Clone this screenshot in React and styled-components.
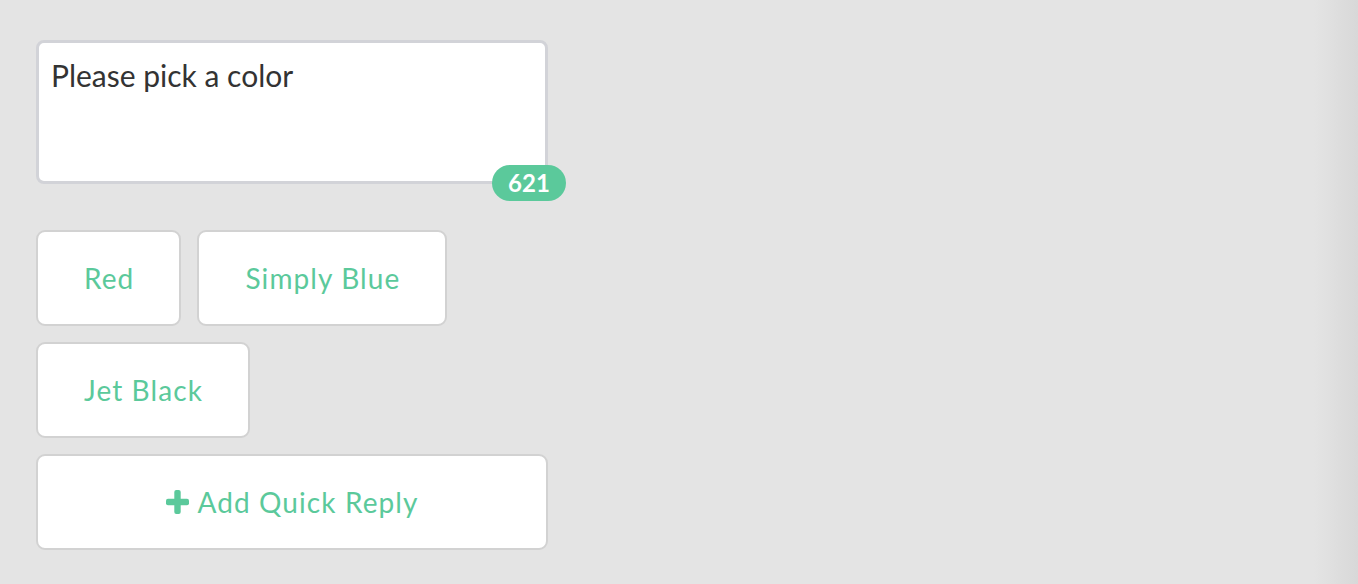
import React from "react";
import styled, { createGlobalStyle } from "styled-components";

const Global = createGlobalStyle`
  html, body {
    margin: 0;
    padding: 0;
    height: 100%;
  }
  body {
    font-family: Lato, "Open Sans", "Liberation Sans", sans-serif;
    background: linear-gradient(to right, #e4e4e4 0, #e4e4e4 calc(100% - 44px), #d8d8d8 100%);
    min-height: 584px;
  }
`;

const Page = styled.div`
  padding: 40px 36px;
  display: flex;
  flex-direction: column;
  width: 512px;
`;

const MessageBox = styled.div`
  position: relative;
  box-sizing: border-box;
  height: 144px;
  background: #fff;
  border: 3px solid #d2d3d8;
  border-radius: 8px;
  padding: 14px 12px;
  font-size: 30px;
  color: #333;
  line-height: 1.2;
`;

const Counter = styled.span`
  position: absolute;
  right: -21px;
  bottom: -20px;
  height: 36px;
  min-width: 74px;
  box-sizing: border-box;
  padding: 0 14px;
  border-radius: 18px;
  background: #5bc99b;
  color: #fff;
  font-weight: 700;
  font-size: 24px;
  line-height: 1;
  display: flex;
  align-items: center;
  justify-content: center;
`;

const Replies = styled.div`
  margin-top: 46px;
  display: flex;
  flex-wrap: wrap;
  gap: 16px;
`;

const ReplyButton = styled.button`
  box-sizing: border-box;
  height: 96px;
  padding: 0 45px 0 46px;
  background: #fff;
  border: 2px solid #d2d2d2;
  border-radius: 9px;
  font-family: inherit;
  font-size: 28px;
  letter-spacing: 1.1px;
  color: #5bc99b;
  display: flex;
  align-items: center;
  justify-content: center;
  gap: 8px;
  width: ${(p) => (p.$full ? "100%" : "auto")};
`;

const Plus = () => (
  <svg width="23" height="24" viewBox="0 0 23 24" aria-hidden="true">
    <rect x="8.3" y="0" width="6.4" height="24" rx="2" fill="#5bc99b" />
    <rect x="0" y="8.8" width="23" height="6.4" rx="2" fill="#5bc99b" />
  </svg>
);

export default function App() {
  return (
    <>
      <Global />
      <Page>
        <MessageBox>
          Please pick a color
          <Counter>621</Counter>
        </MessageBox>
        <Replies>
          <ReplyButton>Red</ReplyButton>
          <ReplyButton>Simply Blue</ReplyButton>
          <ReplyButton>Jet Black</ReplyButton>
          <ReplyButton $full>
            <Plus />
            Add Quick Reply
          </ReplyButton>
        </Replies>
      </Page>
    </>
  );
}
